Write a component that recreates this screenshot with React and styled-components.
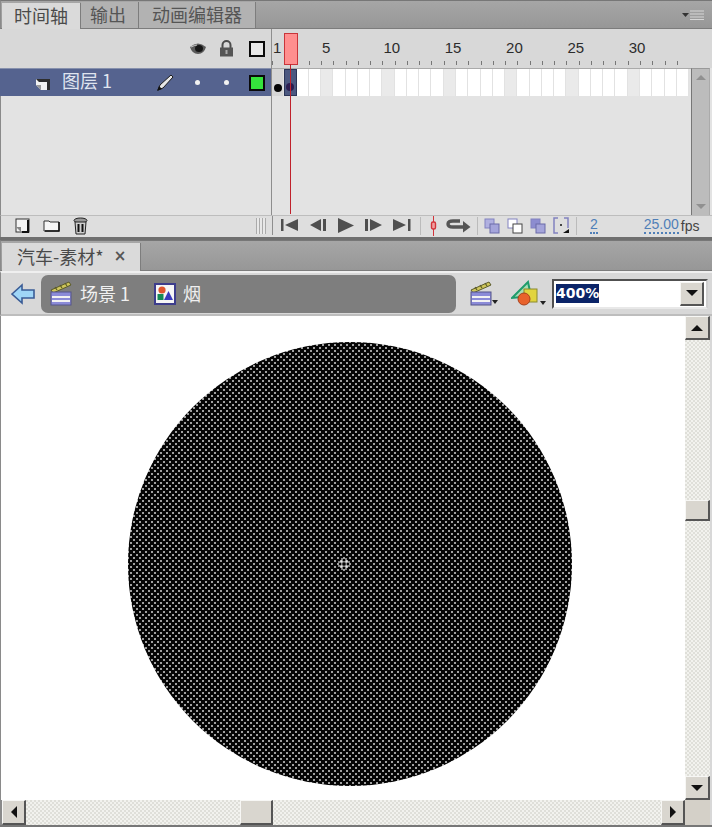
import React from 'react';
import styled, { createGlobalStyle } from 'styled-components';

const GlobalStyle = createGlobalStyle`
  html, body {
    margin: 0;
    padding: 0;
    background: #d8d8d8;
  }
  * { box-sizing: border-box; }
`;

const CJK = `"Noto Sans CJK SC", "Liberation Sans", sans-serif`;
const FRAME = 12.27;

const Window = styled.div`
  width: 712px;
  height: 827px;
  display: flex;
  flex-direction: column;
  overflow: hidden;
  background: #d8d8d8;
  font-family: "Liberation Sans", sans-serif;
`;

/* ---- tab strips ---- */
const TabStrip = styled.div`
  height: ${({ $h }) => $h}px;
  flex: none;
  display: flex;
  align-items: flex-end;
  padding: 1px 0 0 1px;
  background: linear-gradient(#a6a6a6, #979797);
  border-top: 1px solid #777;
  border-bottom: 1px solid #7c7c7c;
  border-left: 1px solid #8a8a8a;
`;

const Tab = styled.div`
  height: 100%;
  margin-bottom: ${({ $active }) => ($active ? '-1px' : '0')};
  width: ${({ $w }) => $w}px;
  padding: 0 0 2px ${({ $pad }) => $pad}px;
  display: flex;
  align-items: center;
  background: ${({ $active }) => ($active ? '#dadada' : '#b2b2b2')};
  border-right: 1px solid #7d7d7d;
  color: ${({ $active }) => ($active ? '#4a4a4a' : '#555')};
  font-family: ${CJK};
  font-size: 18px;
  white-space: nowrap;
`;

const DocClose = styled.span`
  margin-left: 10px;
  font-family: "DejaVu Sans", sans-serif;
  font-size: 15px;
  font-weight: bold;
  color: #555;
`;

const PanelMenu = styled.div`
  margin: 0 8px 0 auto;
  align-self: center;
  display: flex;
`;

/* ---- timeline ---- */
const TimelineBody = styled.div`
  height: 186px;
  flex: none;
  display: flex;
`;

const LayerColumn = styled.div`
  width: 272px;
  flex: none;
  display: flex;
  flex-direction: column;
  background: #e3e3e3;
  border-left: 1px solid #8a8a8a;
`;

const LayerGrid = styled.div`
  height: ${({ $h }) => $h}px;
  margin-left: -1px;
  flex: none;
  display: grid;
  grid-template-columns: 183px 29px 29px 31px;
  align-items: center;
  justify-items: center;
  background: ${({ $selected }) => ($selected ? '#55638f' : '#d8d8d8')};
  border-top: ${({ $selected }) => ($selected ? '1px solid #8791ad' : '0')};
`;

const LayerName = styled.div`
  justify-self: stretch;
  display: flex;
  align-items: center;
  padding: 0 8px 0 36px;
  color: #dfe4ef;
  font-family: ${CJK};
  font-size: 18px;
`;

const NameText = styled.span`
  margin: -5px 0 0 10px;
`;

const Pencil = styled.span`
  margin-left: auto;
  display: flex;
`;

const WhiteDot = styled.span`
  width: 5px;
  height: 5px;
  border-radius: 50%;
  background: #f2f2f2;
`;

const ColorSwatch = styled.span`
  width: 16px;
  height: 16px;
  background: #35e33c;
  border: 2px solid #0a0a0a;
`;

const OutlineBox = styled.span`
  width: 16px;
  height: 16px;
  background: #e8e8e8;
  border: 2px solid #0a0a0a;
`;

const LayerEmpty = styled.div`
  flex: 1;
`;

const FrameColumn = styled.div`
  flex: 1;
  position: relative;
  display: flex;
  flex-direction: column;
  background: #e3e3e3;
  border-left: 1px solid #8e8e8e;
  margin-left: -1px;
`;

const Ruler = styled.div`
  height: 39px;
  flex: none;
  display: flex;
  background: #d8d8d8;
`;

const RulerCell = styled.div`
  width: ${FRAME}px;
  flex: none;
  position: relative;
  padding: 10px 0 0 1px;
  font-size: 15px;
  line-height: 18px;
  color: #2c2c2c;
  white-space: nowrap;

  &::after {
    content: '';
    position: absolute;
    left: 0;
    bottom: 3px;
    width: 1px;
    height: 4px;
    background: #777;
  }
`;

const FrameArea = styled.div`
  flex: 1;
  display: flex;
  padding-right: 2px;
`;

const FrameStack = styled.div`
  flex: 1;
`;

const FrameRow = styled.div`
  height: 28px;
  display: flex;
  border-top: 1px solid #aaa;
`;

const FrameCell = styled.div`
  width: ${FRAME}px;
  flex: none;
  display: flex;
  align-items: flex-end;
  justify-content: center;
  padding-bottom: 4px;
  border-right: 1px solid #e2e2e2;
  background: ${({ $kind }) =>
    $kind === 'key' ? '#d6d6d6' : $kind === 'selected' ? '#4b5880' : $kind === 'fifth' ? '#eaeaea' : '#ffffff'};
  ${({ $kind }) => $kind === 'selected' && 'border: 1px solid #2b3558;'}
`;

const KeyDot = styled.span`
  width: 8px;
  height: 8px;
  border-radius: 50%;
  background: ${({ $dim }) => ($dim ? '#2b1c50' : '#050505')};
`;

const PlayHead = styled.div`
  position: absolute;
  left: 12px;
  top: 4px;
  width: 14px;
  height: 32px;
  background: #ff8f8f;
  border: 1px solid #c8353a;

  &::after {
    content: '';
    position: absolute;
    left: 5px;
    top: 30px;
    width: 1px;
    height: 150px;
    background: #c0222c;
  }
`;

const TimelineScroll = styled.div`
  width: 19px;
  flex: none;
  display: flex;
  flex-direction: column;
  align-items: center;
  padding-top: 6px;
  background: #bcbcbc;
  border-left: 1px solid #777;
  border-top: 1px solid #999;
  border-right: 1px solid #aaa;
`;

const MiniArrow = styled.span`
  width: 0;
  height: 0;
  border-left: 5px solid transparent;
  border-right: 5px solid transparent;
  ${({ $down }) =>
    $down ? 'border-top: 5px solid #909090;' : 'border-bottom: 5px solid #909090;'}
  margin-top: ${({ $down }) => ($down ? 'auto' : '0')};
  margin-bottom: ${({ $down }) => ($down ? '6px' : '0')};
`;

/* ---- timeline footer ---- */
const Footer = styled.div`
  height: 22px;
  flex: none;
  display: flex;
  padding-bottom: 2px;
  border-top: 1px solid #bdbdbd;
  background: #dedede;
  border-left: 1px solid #8a8a8a;
`;

const FooterLeft = styled.div`
  width: 271px;
  flex: none;
  display: flex;
  align-items: center;
  padding-left: 14px;
  gap: 13px;
`;

const FooterRight = styled.div`
  flex: 1;
  display: flex;
  align-items: center;
  border-left: 1px solid #8e8e8e;
  padding-left: 8px;
`;

const Group = styled.div`
  display: flex;
  align-items: center;
  gap: ${({ $gap }) => $gap}px;
`;

const Grip = styled.div`
  margin-left: auto;
  margin-right: 6px;
  width: 10px;
  height: 16px;
  background: repeating-linear-gradient(90deg, #aaa 0 1px, #e8e8e8 1px 3px);
`;

const Sep = styled.span`
  width: 1px;
  height: 18px;
  margin: 0 ${({ $m }) => $m}px;
  background: #bbb;
`;

const LoopSlot = styled.span`
  margin-left: 9px;
  display: flex;
`;

const BlueNum = styled.span`
  font-size: 14px;
  line-height: 15px;
  color: #4f7fb8;
  border-bottom: 2px dotted #4f7fb8;
  margin-left: ${({ $ml }) => $ml}px;
`;

const Fps = styled.span`
  margin-left: 2px;
  font-size: 14px;
  color: #444;
`;

const Divider = styled.div`
  height: 3px;
  flex: none;
  background: #6f6f6f;
`;

/* ---- nav bar ---- */
const NavBar = styled.div`
  height: 45px;
  flex: none;
  display: flex;
  align-items: center;
  padding-left: 10px;
  border-bottom: 2px solid #bdbdbd;
  border-left: 1px solid #8a8a8a;
  border-top: 2px solid #efefef;
`;

const Breadcrumb = styled.div`
  width: 415px;
  height: 38px;
  margin-left: 6px;
  padding-left: 9px;
  display: flex;
  align-items: center;
  border-radius: 7px;
  background: #7e7e7e;
  color: #f0f0f0;
  font-family: ${CJK};
  font-size: 18px;
`;

const CrumbText = styled.span`
  margin: -2px ${({ $mr }) => $mr}px 0 7px;
`;

const NavIcons = styled.div`
  margin-left: 14px;
  display: flex;
  align-items: center;
  gap: 13px;
`;

const ZoomCombo = styled.div`
  width: 156px;
  height: 30px;
  margin-left: 6px;
  padding: 2px;
  display: flex;
  align-items: center;
  justify-content: space-between;
  background: #fff;
  border-top: 2px solid #505050;
  border-left: 2px solid #505050;
  border-right: 2px solid #cfcfcf;
  border-bottom: 2px solid #e8e8e8;
`;

const ZoomValue = styled.span`
  background: #0b2468;
  color: #fff;
  font-family: "DejaVu Sans", sans-serif;
  font-weight: bold;
  font-size: 14px;
  line-height: 19px;
`;

const ScrollBtn = styled.div`
  width: ${({ $w }) => $w}px;
  height: ${({ $h }) => $h}px;
  flex: none;
  display: flex;
  align-items: center;
  justify-content: center;
  background: #d9d6cf;
  border-top: 1px solid #f7f7f5;
  border-left: 1px solid #f7f7f5;
  border-right: 2px solid #555;
  border-bottom: 2px solid #555;
`;

const Arrow = styled.span`
  width: 0;
  height: 0;
  border: 6px solid transparent;
  ${({ $dir }) => ($dir === 'up' ? 'border-bottom: 6px solid #111; margin-top: -6px;' : '')}
  ${({ $dir }) => ($dir === 'down' ? 'border-top: 6px solid #111; margin-top: 6px;' : '')}
  ${({ $dir }) => ($dir === 'left' ? 'border-right: 6px solid #111; margin-left: -6px;' : '')}
  ${({ $dir }) => ($dir === 'right' ? 'border-left: 6px solid #111; margin-left: 6px;' : '')}
`;

/* ---- stage ---- */
const StageRow = styled.div`
  flex: 1;
  min-height: 0;
  display: flex;
  padding-right: 2px;
  border-left: 1px solid #8a8a8a;
`;

const Stage = styled.div`
  flex: 1;
  padding: 26px 0 0 127px;
  background: #fff;
`;

const Circle = styled.div`
  position: relative;
  width: 444px;
  height: 444px;
  border-radius: 50%;
  background-color: #050505;
  background-image:
    radial-gradient(circle, #dcdcdc 0.5px, transparent 1.25px),
    radial-gradient(circle, #dcdcdc 0.5px, transparent 1.25px);
  background-size: 6px 6px;
  background-position: 0 0, 3px 3px;
`;

const RegMark = styled.svg`
  position: absolute;
  left: 209px;
  top: 215px;
`;

const DitherV = styled.div`
  flex: 1;
  display: flex;
  flex-direction: ${({ $row }) => ($row ? 'row' : 'column')};
  padding: ${({ $row, $offset }) => ($row ? `0 0 0 ${$offset}px` : `${$offset}px 0 0 0`)};
  background-color: #dfdfd9;
  background-image: conic-gradient(#f2f2ee 25%, transparent 0 50%, #f2f2ee 0 75%, transparent 0);
  background-size: 4px 4px;
`;

const VScroll = styled.div`
  width: 25px;
  flex: none;
  display: flex;
  flex-direction: column;
`;

const HScrollRow = styled.div`
  height: 25px;
  flex: none;
  display: flex;
  padding-right: 2px;
  border-left: 2px solid #8a8a8a;
`;

const Corner = styled.div`
  width: 25px;
  flex: none;
  background: #d4d0c8;
`;

const BottomEdge = styled.div`
  height: 2px;
  flex: none;
  background: #777;
`;

/* ---- icons ---- */
const Eye = () => (
  <svg width="18" height="14" viewBox="0 0 18 14">
    <path d="M1 5 Q9 -2 17 5 Q15 12 9 12 Q3 12 1 5Z" fill="#5a5a5a" />
    <ellipse cx="10" cy="6.5" rx="4" ry="3.6" fill="#161616" />
    <path d="M2 5 Q6 3 8 3" stroke="#c8c8c8" fill="none" />
  </svg>
);

const Lock = () => (
  <svg width="15" height="17" viewBox="0 0 15 17">
    <path d="M3.5 8 V5 a4 4 0 0 1 8 0 V8" fill="none" stroke="#4c4c4c" strokeWidth="2" />
    <rect x="1" y="7.5" width="13" height="9" fill="#555" />
    <rect x="6.5" y="10" width="2" height="4" fill="#aaa" />
  </svg>
);

const LayerIcon = () => (
  <svg width="16" height="14" viewBox="0 0 16 14">
    <path d="M0 3 H14 V14 H5 L0 9Z" fill="#f2f2f2" />
    <path d="M14 3 V14 H11 V6 H3 L0 3Z" fill="#0c0c0c" opacity=".85" />
    <path d="M0 9 H5 V14Z" fill="#999" />
  </svg>
);

const PencilIcon = () => (
  <svg width="19" height="19" viewBox="0 0 19 19">
    <path d="M2 17 L4 12 L15 2 L17 4 L7 15Z" fill="#e8e8e8" stroke="#1c1c1c" strokeWidth="1" />
    <path d="M1 18 L3 13 L6 16Z" fill="#111" />
  </svg>
);

const MenuIcon = () => (
  <svg width="22" height="10" viewBox="0 0 22 10">
    <path d="M0 3 H7 L3.5 7Z" fill="#333" />
    <path d="M8 1 H22 M8 4 H22 M8 7 H22 M8 9.5 H22" stroke="#d6d6d6" strokeWidth="1" />
  </svg>
);

const NewLayer = () => (
  <svg width="15" height="15" viewBox="0 0 15 15">
    <rect x="1" y="1" width="13" height="13" fill="#f4f4f4" stroke="#333" />
    <path d="M1 9 H6 V14Z" fill="#888" />
    <path d="M13 2 V14 H7" stroke="#111" strokeWidth="2" fill="none" />
  </svg>
);

const Folder = () => (
  <svg width="17" height="13" viewBox="0 0 17 13">
    <path d="M1 2 H6 L7 3 H16 V12 H1Z" fill="#f6f6f6" stroke="#333" />
    <path d="M16 3 V12 H2" stroke="#111" strokeWidth="1.5" fill="none" />
  </svg>
);

const Trash = () => (
  <svg width="15" height="18" viewBox="0 0 15 18">
    <ellipse cx="7.5" cy="3.5" rx="6.5" ry="2.5" fill="#999" stroke="#222" />
    <path d="M2 5 L3 17 H12 L13 5Z" fill="#cfcfcf" stroke="#222" />
    <path d="M5.5 7 V15 M9.5 7 V15" stroke="#111" strokeWidth="2" />
  </svg>
);

const TRANSPORT = {
  first: 'M0 1 H2.5 V13 H0Z M17 1 V13 L4 7Z',
  prev: 'M12 1 V13 L1 7Z M14 1 H17 V13 H14Z',
  play: 'M1 0 L17 7.5 L1 15Z',
  next: 'M0 1 H3 V13 H0Z M5 1 L17 7 L5 13Z',
  last: 'M0 1 L13 7 L0 13Z M15 1 H17.5 V13 H15Z',
};

const Transport = ({ name }) => (
  <svg width="18" height="15" viewBox="0 0 18 15">
    <path d={TRANSPORT[name]} fill="#4f4f4f" />
  </svg>
);

const Marker = () => (
  <svg width="7" height="20" viewBox="0 0 7 20">
    <path d="M3.5 0 V20" stroke="#d2333a" />
    <rect x="1.5" y="6" width="4" height="7" rx="1.5" fill="#f0a0a0" stroke="#d2333a" strokeWidth="1.4" />
  </svg>
);

const LoopIcon = () => (
  <svg width="25" height="15" viewBox="0 0 25 15">
    <path d="M14 3 H7 Q2 3 2 6 Q2 9 7 9 H18" fill="none" stroke="#555" strokeWidth="3.4" />
    <path d="M17 3 L24.5 9 L17 14.5Z" fill="#555" />
  </svg>
);

const Onion = ({ back = '#b0b0e0', front = '#a4a4da', white }) => (
  <svg width="16" height="16" viewBox="0 0 16 16">
    <rect x="1" y="1" width="9" height="9" fill={white ? '#fff' : back} stroke="#8282c0" />
    <rect x="6" y="6" width="9" height="9" fill={white ? '#fff' : front} stroke={white ? '#444' : '#6a6aa8'} />
  </svg>
);

const OnionMarkers = () => (
  <svg width="16" height="17" viewBox="0 0 16 17">
    <path d="M5 1 H1 V16 H5 M11 1 H15 V11" fill="none" stroke="#8282c0" strokeWidth="1.5" />
    <rect x="7" y="7" width="2" height="2" fill="#444" />
    <path d="M10 16 H16 V12Z" fill="#111" />
  </svg>
);

const BackArrow = () => (
  <svg width="24" height="22" viewBox="0 0 24 22">
    <path d="M1 11 L11 2 V7 H23 V15 H11 V20Z" fill="#9fd6f7" stroke="#3a5c96" strokeWidth="1.6" />
  </svg>
);

const Clapper = () => (
  <svg width="23" height="25" viewBox="0 0 23 25">
    <path d="M1 9 L19 1 L21 4 L3 12Z" fill="#cfc65a" stroke="#5a5a2a" />
    <path d="M5 6 L7 9 M10 4 L12 7 M15 2 L17 5" stroke="#5a5a2a" strokeWidth="1.2" />
    <rect x="1" y="11" width="20" height="13" fill="#8b8bd8" stroke="#55558a" />
    <rect x="2" y="15" width="18" height="2" fill="#f2f2f2" />
    <rect x="2" y="19" width="18" height="2" fill="#f2f2f2" />
  </svg>
);

const SmallDrop = styled.span`
  margin: 0 0 2px -1px;
  width: 0;
  height: 0;
  border-left: 3px solid transparent;
  border-right: 3px solid transparent;
  border-top: 4px solid #222;
`;

const IconDrop = styled.span`
  display: flex;
  align-items: flex-end;
`;

const SymbolIcon = () => (
  <svg width="22" height="22" viewBox="0 0 22 22">
    <rect x="1" y="1" width="20" height="20" fill="#f6f6f6" stroke="#3d3d8c" strokeWidth="2" />
    <circle cx="8" cy="7" r="3.6" fill="#e0562e" />
    <rect x="3.5" y="11" width="6" height="6" fill="#158a55" />
    <path d="M14.5 8 L19 17 H10Z" fill="#3b3bbd" />
  </svg>
);

const ShapesIcon = () => (
  <svg width="30" height="27" viewBox="0 0 30 27">
    <path d="M1 18 L17 2 L20 16Z" fill="#a9dcb6" stroke="#1f9c6c" strokeWidth="2" />
    <rect x="13" y="9" width="13" height="13" fill="#e1d43e" stroke="#8a8a2c" />
    <circle cx="13" cy="19" r="6" fill="#e8622c" stroke="#a8401c" />
  </svg>
);

const Reg = () => (
  <RegMark width="14" height="14" viewBox="0 0 14 14">
    <path d="M5 1 V13 M9 1 V13 M1 5 H13 M1 9 H13" stroke="#fff" strokeWidth="1" />
    <rect x="5.5" y="5.5" width="3" height="3" fill="#050505" />
  </RegMark>
);

const frames = Array.from({ length: 34 }, (_, i) => i + 1);

const frameKind = (n) => {
  if (n === 1) return 'key';
  if (n === 2) return 'selected';
  return n % 5 === 0 ? 'fifth' : 'plain';
};

const rulerLabel = (n) => (n === 1 || n % 5 === 0 ? n : null);

export default function App() {
  return (
    <Window>
      <GlobalStyle />

      <TabStrip $h={29}>
        <Tab $active $w={79} $pad={12}>时间轴</Tab>
        <Tab $w={58} $pad={9}>输出</Tab>
        <Tab $w={117} $pad={13}>动画编辑器</Tab>
        <PanelMenu><MenuIcon /></PanelMenu>
      </TabStrip>

      <TimelineBody>
        <LayerColumn>
          <LayerGrid $h={39}>
            <span />
            <Eye />
            <Lock />
            <OutlineBox />
          </LayerGrid>
          <LayerGrid $h={28} $selected>
            <LayerName>
              <LayerIcon />
              <NameText>图层 1</NameText>
              <Pencil><PencilIcon /></Pencil>
            </LayerName>
            <WhiteDot />
            <WhiteDot />
            <ColorSwatch />
          </LayerGrid>
          <LayerEmpty />
        </LayerColumn>

        <FrameColumn>
          <Ruler>
            {frames.map((n) => (
              <RulerCell key={n}>{rulerLabel(n)}</RulerCell>
            ))}
          </Ruler>
          <FrameArea>
            <FrameStack>
              <FrameRow>
                {frames.map((n) => (
                  <FrameCell key={n} $kind={frameKind(n)}>
                    {n === 1 && <KeyDot />}
                    {n === 2 && <KeyDot $dim />}
                  </FrameCell>
                ))}
              </FrameRow>
            </FrameStack>
            <TimelineScroll>
              <MiniArrow />
              <MiniArrow $down />
            </TimelineScroll>
          </FrameArea>
          <PlayHead />
        </FrameColumn>
      </TimelineBody>

      <Footer>
        <FooterLeft>
          <NewLayer />
          <Folder />
          <Trash />
          <Grip />
        </FooterLeft>
        <FooterRight>
          <Group $gap={10}>
            <Transport name="first" />
            <Transport name="prev" />
            <Transport name="play" />
            <Transport name="next" />
            <Transport name="last" />
          </Group>
          <Sep $m={9} />
          <Marker />
          <LoopSlot><LoopIcon /></LoopSlot>
          <Sep $m={6} />
          <Group $gap={7}>
            <Onion />
            <Onion white />
            <Onion back="#8c8cd0" />
            <OnionMarkers />
          </Group>
          <Sep $m={7} />
          <BlueNum $ml={6}>2</BlueNum>
          <BlueNum $ml={46}>25.00</BlueNum>
          <Fps>fps</Fps>
        </FooterRight>
      </Footer>

      <Divider />

      <TabStrip $h={31}>
        <Tab $active $w={139} $pad={15}>
          汽车-素材*
          <DocClose>×</DocClose>
        </Tab>
      </TabStrip>

      <NavBar>
        <BackArrow />
        <Breadcrumb>
          <Clapper />
          <CrumbText $mr={24}>场景 1</CrumbText>
          <SymbolIcon />
          <CrumbText $mr={0}>烟</CrumbText>
        </Breadcrumb>
        <NavIcons>
          <IconDrop><Clapper /><SmallDrop /></IconDrop>
          <IconDrop><ShapesIcon /><SmallDrop /></IconDrop>
        </NavIcons>
        <ZoomCombo>
          <ZoomValue>400%</ZoomValue>
          <ScrollBtn $w={24} $h={24}><Arrow $dir="down" /></ScrollBtn>
        </ZoomCombo>
      </NavBar>

      <StageRow>
        <Stage>
          <Circle><Reg /></Circle>
        </Stage>
        <VScroll>
          <ScrollBtn $w={25} $h={24}><Arrow $dir="up" /></ScrollBtn>
          <DitherV $offset={160}>
            <ScrollBtn $w={25} $h={21} />
          </DitherV>
          <ScrollBtn $w={25} $h={24}><Arrow $dir="down" /></ScrollBtn>
        </VScroll>
      </StageRow>

      <HScrollRow>
        <ScrollBtn $w={24} $h={25}><Arrow $dir="left" /></ScrollBtn>
        <DitherV $row $offset={214}>
          <ScrollBtn $w={33} $h={25} />
        </DitherV>
        <ScrollBtn $w={24} $h={25}><Arrow $dir="right" /></ScrollBtn>
        <Corner />
      </HScrollRow>
      <BottomEdge />
    </Window>
  );
}
